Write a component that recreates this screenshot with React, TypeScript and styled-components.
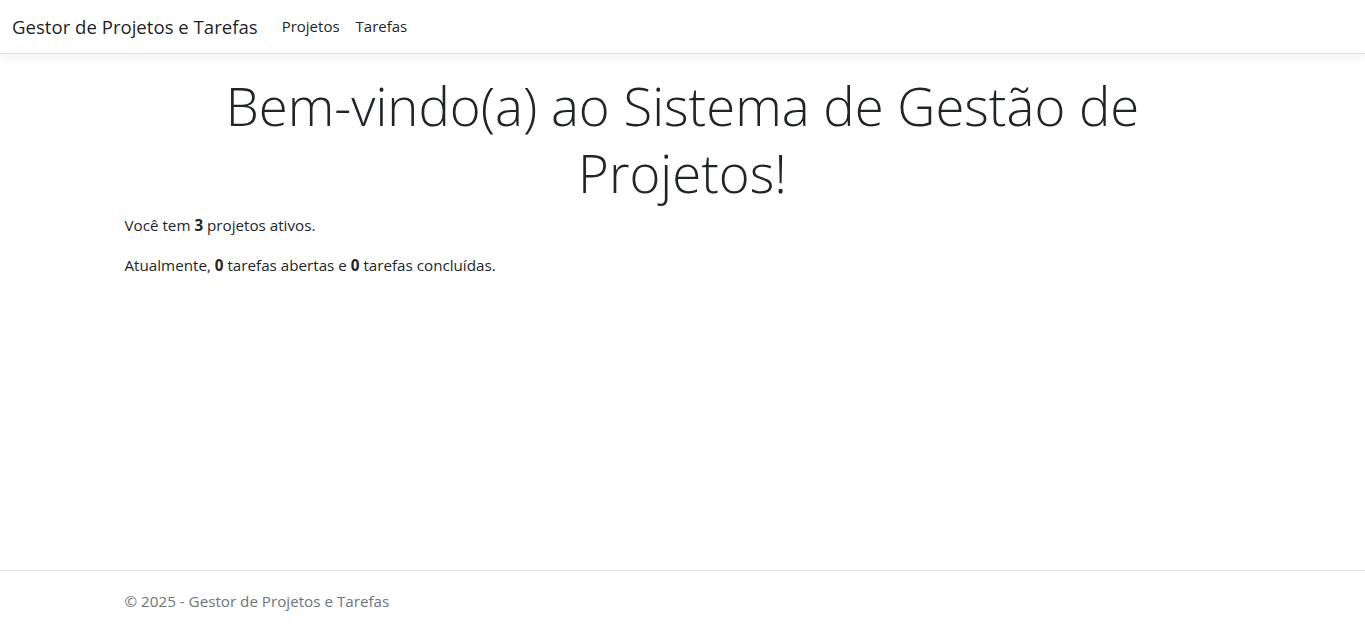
import React from "react";
import styled, { createGlobalStyle } from "styled-components";

const GlobalStyle = createGlobalStyle`
  *, *::before, *::after { box-sizing: border-box; }
  html, body { margin: 0; padding: 0; }
  body {
    font-family: "Segoe UI", "Open Sans", "Noto Sans", sans-serif;
    font-size: 15.2px;
    line-height: 24px;
    color: #212529;
    background: #fff;
  }
`;

const Page = styled.div`
  display: flex;
  flex-direction: column;
  min-height: 631px;
`;

const Navbar = styled.header`
  display: flex;
  align-items: center;
  height: 54px;
  padding: 0 12px;
  background: #fff;
  border-bottom: 1px solid #dee2e6;
  box-shadow: 0 4px 12px rgba(0, 0, 0, 0.05);
  margin-bottom: 16px;
`;

const Brand = styled.a`
  font-size: 18.6px;
  line-height: 30px;
  color: rgba(0, 0, 0, 0.9);
  text-decoration: none;
  margin-right: 16px;
  white-space: nowrap;
`;

const NavList = styled.nav`
  display: flex;
`;

const NavLink = styled.a`
  padding: 7px 8px 9px;
  font-size: 15px;
  line-height: 24px;
  color: #212529;
  text-decoration: none;
`;

const Main = styled.main`
  flex: 1;
  width: 1140px;
  max-width: 100%;
  margin: 0 auto;
  padding: 0 12px 16px;
`;

const Title = styled.h1`
  margin: 0 0 7px;
  padding-top: 2px;
  font-size: 52.7px;
  font-weight: 300;
  line-height: 67.2px;
  text-align: center;
  color: #212529;
`;

const Para = styled.p`
  margin: 0 0 16px;
`;

const Footer = styled.footer`
  border-top: 1px solid #dee2e6;
  color: #6c757d;
  line-height: 60px;
  white-space: nowrap;
`;

const FooterInner = styled.div`
  width: 1140px;
  max-width: 100%;
  margin: 0 auto;
  padding: 0 12px;
`;

export default function App() {
  return (
    <>
      <GlobalStyle />
      <Page>
        <Navbar>
          <Brand href="#">Gestor de Projetos e Tarefas</Brand>
          <NavList>
            <NavLink href="#">Projetos</NavLink>
            <NavLink href="#">Tarefas</NavLink>
          </NavList>
        </Navbar>
        <Main>
          <Title>Bem-vindo(a) ao Sistema de Gestão de Projetos!</Title>
          <Para>
            Você tem <strong>3</strong> projetos ativos.
          </Para>
          <Para>
            Atualmente, <strong>0</strong> tarefas abertas e <strong>0</strong> tarefas concluídas.
          </Para>
        </Main>
        <Footer>
          <FooterInner>© 2025 - Gestor de Projetos e Tarefas</FooterInner>
        </Footer>
      </Page>
    </>
  );
}
